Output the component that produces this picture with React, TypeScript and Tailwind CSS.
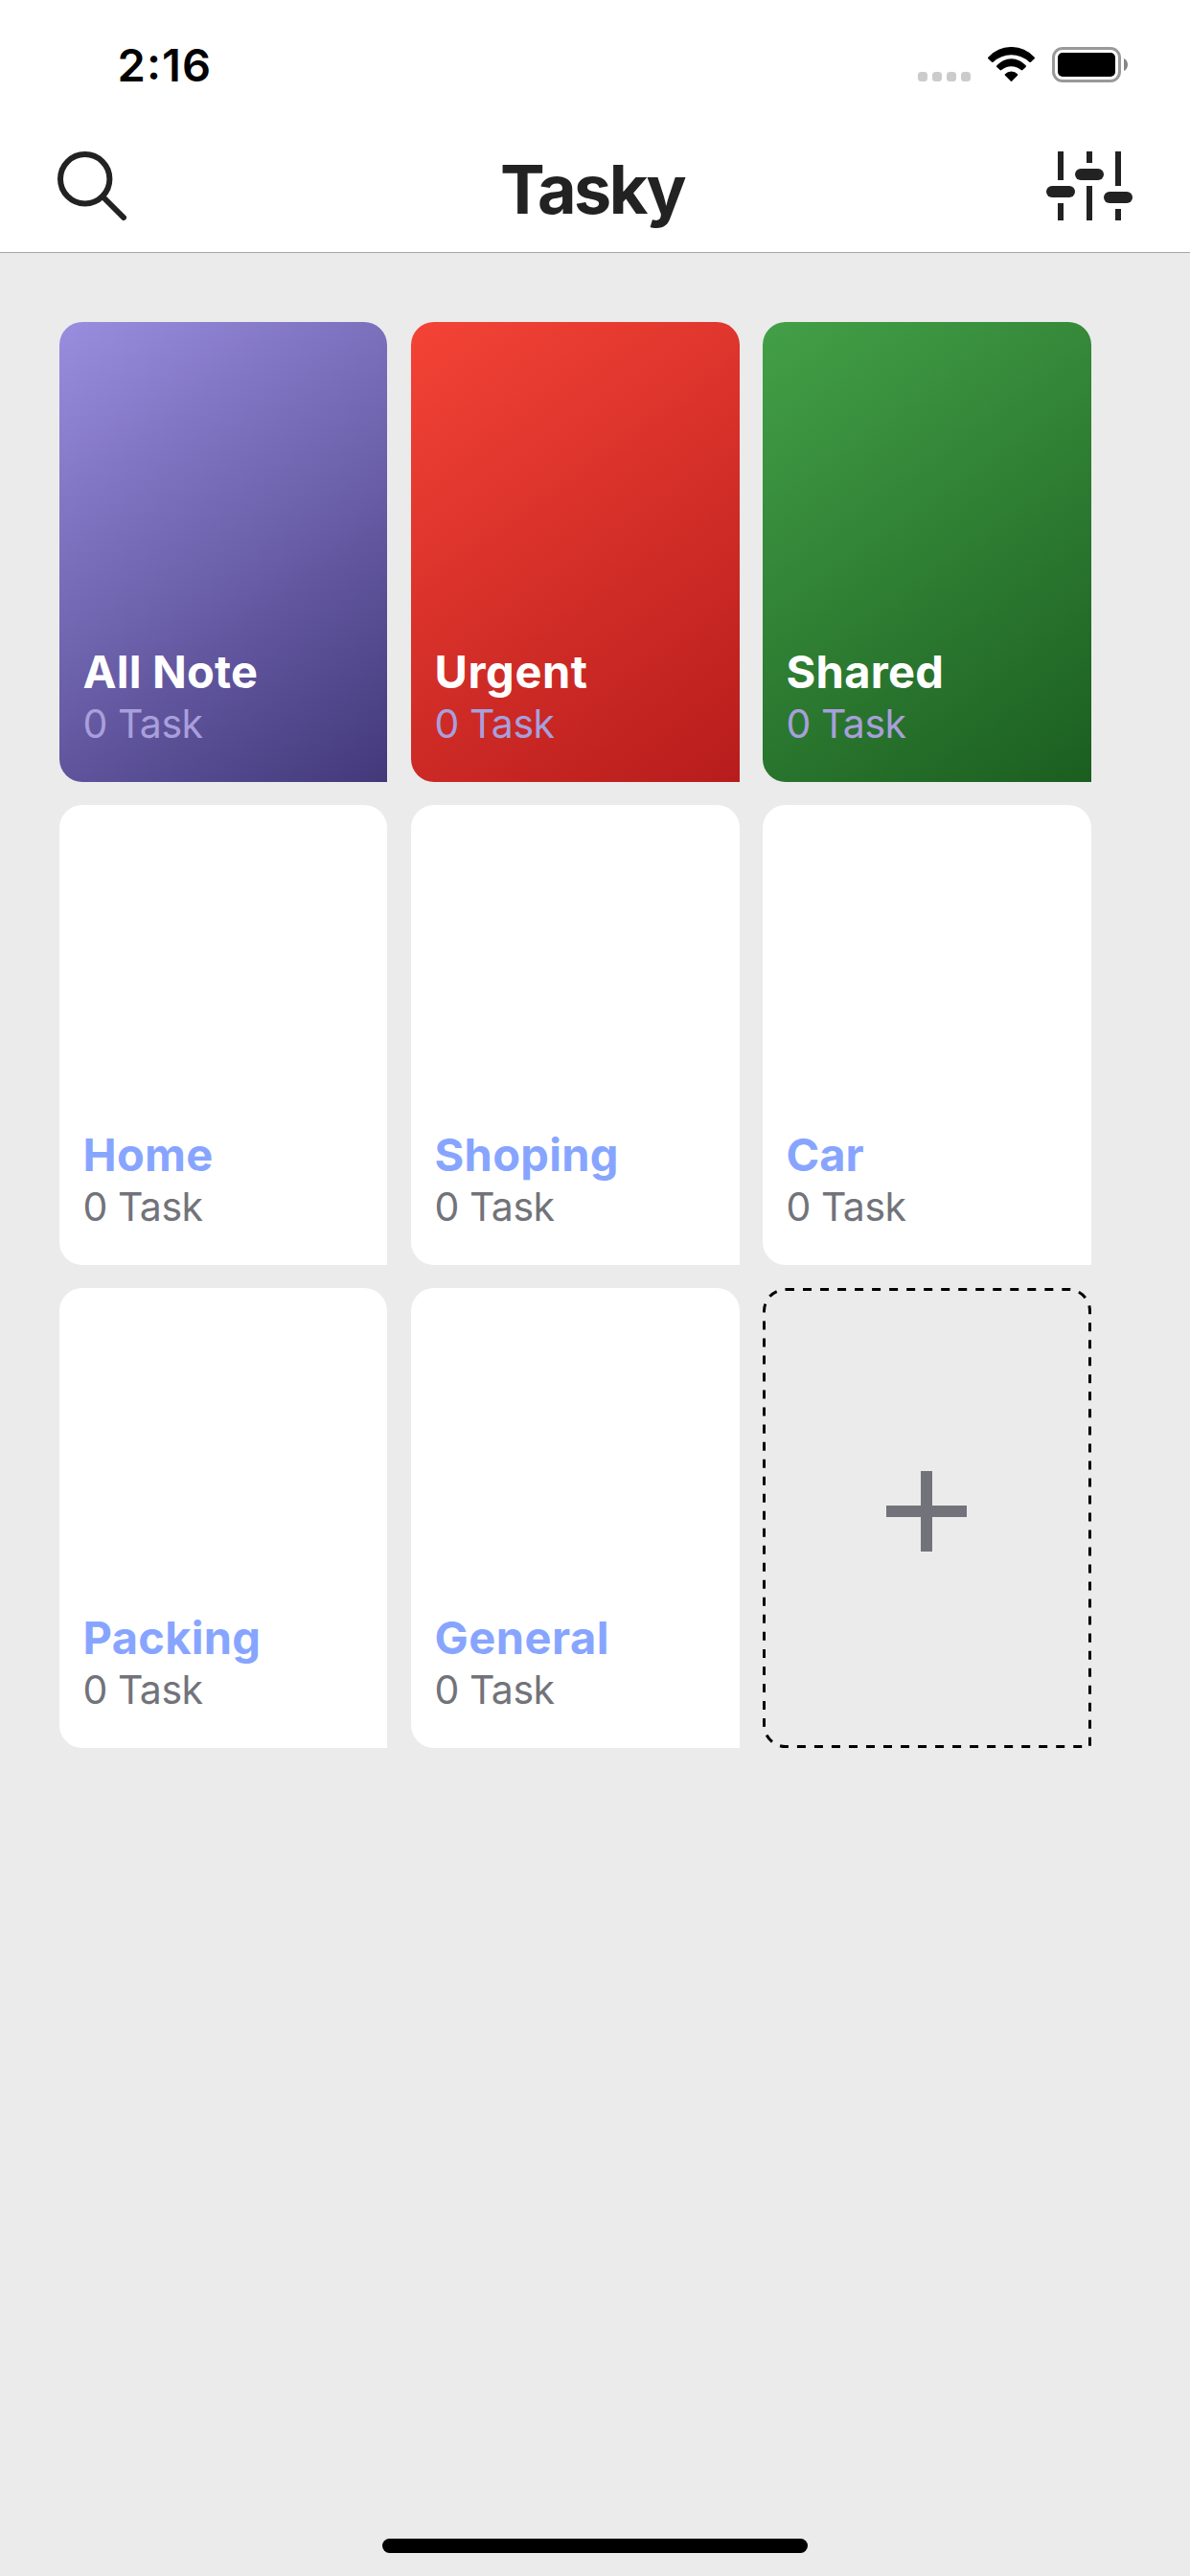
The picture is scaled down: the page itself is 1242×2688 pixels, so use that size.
type Card = {
  title: string;
  surface: string;
  titleStyle: string;
  countColor: string;
};

const cards: Card[] = [
  { title: "All Note", surface: "bg-[linear-gradient(144.5deg,#998ddf,#42387a)]", titleStyle: "tracking-[0.2px] text-white", countColor: "text-[#a89fdc]" },
  { title: "Urgent", surface: "bg-[linear-gradient(144.5deg,#f44336,#b71c1c)]", titleStyle: "tracking-[0.6px] text-white", countColor: "text-[#a89fdc]" },
  { title: "Shared", surface: "bg-[linear-gradient(144.5deg,#43a047,#1b5e20)]", titleStyle: "tracking-[0.3px] text-white", countColor: "text-[#a89fdc]" },
  { title: "Home", surface: "bg-white", titleStyle: "tracking-[0.3px] text-[#87a5ff]", countColor: "text-[#72737a]" },
  { title: "Shoping", surface: "bg-white", titleStyle: "tracking-[0.3px] text-[#87a5ff]", countColor: "text-[#72737a]" },
  { title: "Car", surface: "bg-white", titleStyle: "text-[#87a5ff]", countColor: "text-[#72737a]" },
  { title: "Packing", surface: "bg-white", titleStyle: "tracking-[0.3px] text-[#87a5ff]", countColor: "text-[#72737a]" },
  { title: "General", surface: "bg-white", titleStyle: "tracking-[0.5px] text-[#87a5ff]", countColor: "text-[#72737a]" },
];

function StatusBar() {
  return (
    <div className="flex h-[132px] items-start justify-between pt-[39px] pr-[65px] pl-[122.500px]">
      <span className="text-[47px] leading-[57px] font-semibold tracking-[1.1px] text-black">
        2<span className="relative -top-[2px]">:</span>16
      </span>
      <div className="flex pt-[10px]">
        <div className="mt-[26px] flex gap-[5px]">
          {[0, 1, 2, 3].map((i) => (
            <span key={i} className="size-[10px] rounded-[3.5px] bg-[#cbcbcb]" />
          ))}
        </div>
        <svg className="ml-[18px] h-[36px] w-[49px]" viewBox="0 0 147 108">
          <path d="M1 32A98 98 0 0 1 146 32Q148 35 146 37L134 48Q132 49 130 47A83 83 0 0 0 17 47Q15 49 13 48L1 37Q-1 35 1 32Z" />
          <path d="M28 58A60 60 0 0 1 119 58Q121 61 119 63L108 73Q106 74 104 72A46 46 0 0 0 43 72Q41 74 39 73L28 63Q26 61 28 58Z" />
          <path d="M54 85A26 26 0 0 1 93 85Q95 87 93 89L75 107Q73.500 108.500 72 107L54 89Q52 87 54 85Z" />
        </svg>
        <svg className="ml-[18px] h-[37px] w-[79px]" viewBox="0 0 79 37">
          <rect x="1.500" y="1.500" width="69" height="34" rx="9.500" fill="none" stroke="#999" strokeWidth="3" />
          <rect x="6" y="6" width="60" height="25" rx="5" />
          <path d="M75 12C77.500 13.200 79 15.500 79 18.500S77.500 23.800 75 25Z" fill="#858585" />
        </svg>
      </div>
    </div>
  );
}

function SearchIcon() {
  return (
    <svg className="size-[72px]" viewBox="0 0 72 72" fill="none" stroke="#222" strokeWidth="6">
      <circle cx="28.700" cy="28.700" r="25.700" />
      <path d="M47 47L69 69" strokeLinecap="round" />
    </svg>
  );
}

function SlidersIcon() {
  return (
    <svg className="h-[72px] w-[90px]" viewBox="0 0 90 72" fill="#222">
      <path d="M12 0h6v30h-6zM12 54h6v18h-6zM42 0h6v12h-6zM42 36h6v36h-6zM72 0h6v36h-6zM72 60h6v12h-6z" />
      <rect y="36" width="30" height="12" rx="6" />
      <rect x="30" y="18" width="30" height="12" rx="6" />
      <rect x="60" y="42" width="30" height="12" rx="6" />
    </svg>
  );
}

function TaskCard({ title, surface, titleStyle, countColor }: Card) {
  return (
    <div className={`flex flex-col justify-end rounded-3xl rounded-br-none pb-[36px] pl-[24.500px] nth-[3n+1]:mr-px ${surface}`}>
      <h2 className={`mb-px text-[47px] leading-[57px] font-bold whitespace-nowrap ${titleStyle}`}>{title}</h2>
      <p className={`text-[41px] leading-[50px] tracking-[-0.5px] ${countColor}`}>0 Task</p>
    </div>
  );
}

function AddCard() {
  return (
    <button className="relative flex items-center justify-center pb-[14px]">
      <svg className="absolute inset-0" width="343" height="480" fill="none" stroke="#000" strokeWidth="3">
        <path
          d="M24 1.500H319A22.500 22.500 0 0 1 341.500 24V478.500H24A22.500 22.500 0 0 1 1.500 456V24A22.500 22.500 0 0 1 24 1.500"
          strokeDasharray="9.010 9.010"
        />
      </svg>
      <svg className="mr-px size-[84px]" viewBox="0 0 84 84" fill="#72737a">
        <path d="M36 0h12v36h36v12H48v36H36V48H0V36h36z" />
      </svg>
    </button>
  );
}

export default function App() {
  return (
    <main className="flex h-[2688px] w-[1242px] flex-col bg-[#ebebeb] font-['Inter',sans-serif]">
      <header className="h-[264px] shrink-0 border-b border-[#a7a7a7] bg-white">
        <StatusBar />
        <div className="grid grid-cols-[1fr_auto_1fr] items-start px-[60px]">
          <div className="pt-[26px]">
            <SearchIcon />
          </div>
          <h1 className="pt-[23px] pr-[6px] text-[70px] leading-[85px] font-bold tracking-[-2.5px] text-[#222]">Tasky</h1>
          <div className="flex justify-end pt-[26px]">
            <SlidersIcon />
          </div>
        </div>
      </header>
      <section className="grid auto-rows-[480px] grid-cols-[343px_343px_343px] gap-6 pt-[72px] pl-[62px]">
        {cards.map((card) => (
          <TaskCard key={card.title} {...card} />
        ))}
        <AddCard />
      </section>
      <div className="mx-auto mt-auto mb-[24px] h-[15px] w-[444px] rounded-full bg-black" />
    </main>
  );
}
